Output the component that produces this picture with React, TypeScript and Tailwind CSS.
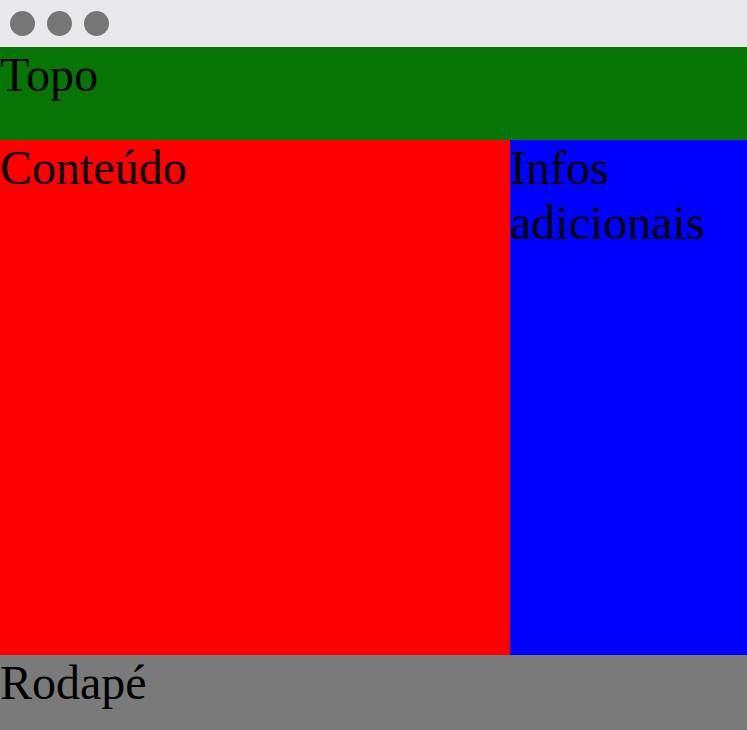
import React from 'react';

export default function App() {
  return (
    <div className="flex h-[730px] w-[747px] flex-col overflow-hidden bg-[#e9e8ea] font-['Liberation_Serif',serif] text-[48px] leading-[1.15] text-black">
      {/* Window chrome */}
      <div className="flex h-[47px] shrink-0 items-center gap-[12px] pl-[10px]">
        <span className="h-[25px] w-[25px] rounded-full bg-[#767676]" />
        <span className="h-[25px] w-[25px] rounded-full bg-[#767676]" />
        <span className="h-[25px] w-[25px] rounded-full bg-[#767676]" />
      </div>

      <header className="h-[93px] shrink-0 bg-[#067506]">Topo</header>

      <div className="flex h-[515px] shrink-0">
        <main className="w-[510px] bg-[#ff0000]">Conteúdo</main>
        <aside className="flex-1 bg-[#0000ff]">Infos adicionais</aside>
      </div>

      <footer className="flex-1 bg-[#7a7a7a]">Rodapé</footer>
    </div>
  );
}
